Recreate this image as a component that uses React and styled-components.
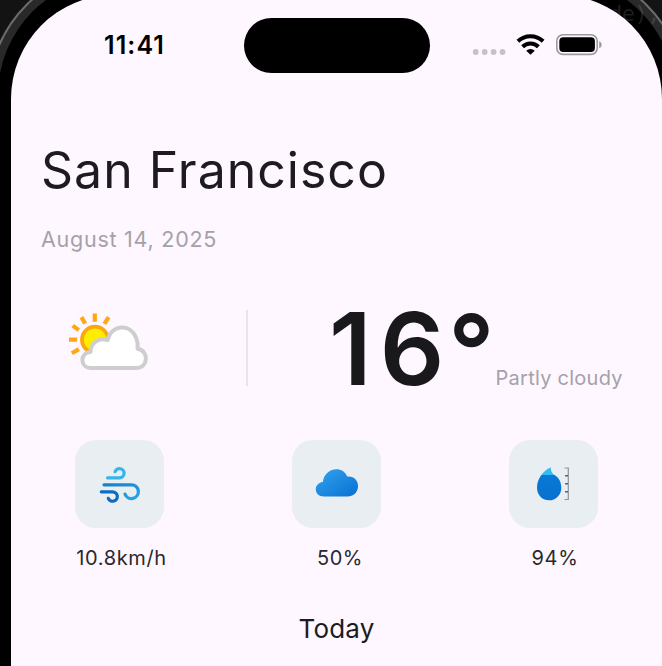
import React from "react";
import styled, { createGlobalStyle } from "styled-components";

const GlobalStyle = createGlobalStyle`
  * { box-sizing: border-box; }
  html, body { margin: 0; padding: 0; overflow: hidden; background: #131313; }
  body { font-family: Inter, "Liberation Sans", sans-serif; color: #1d1b20; }
`;

const Desktop = styled.div`
  position: relative;
  width: 662px;
  height: 666px;
  overflow: hidden;
  background: #131313;
`;

const WindowText = styled.div`
  position: absolute;
  top: 0;
  left: 609px;
  font: 22px/28px "DejaVu Sans Mono", monospace;
  letter-spacing: -0.5px;
  white-space: nowrap;
  color: rgba(255, 255, 255, 0.12);
`;

const Device = styled.div`
  width: 697px;
  height: 900px;
  margin: -33px 0 0 -12px;
  padding: 8px;
  border: 2px solid #6c6c6c;
  border-radius: 128px;
  background: #292929;
`;

const Bezel = styled.div`
  height: 100%;
  padding: 18px 13px;
  border-radius: 118px;
  background: #000;
`;

const Screen = styled.div`
  height: 100%;
  width: 651px;
  padding-top: 5px;
  border-radius: 103px / 104px;
  background: #fef7ff;
`;

const StatusBar = styled.header`
  display: grid;
  grid-template-columns: 232.5px 186px 1fr;
  align-items: center;
  height: 90px;
`;

const Clock = styled.div`
  padding-left: 93px;
  font-size: 25px;
  line-height: 30px;
  font-weight: 600;
  letter-spacing: 1.1px;
  color: #000;
`;

const Island = styled.div`
  height: 55px;
  border-radius: 28px;
  background: #000;
`;

const StatusIcons = styled.div`
  display: flex;
  padding-left: 42.5px;
`;

const Content = styled.main`
  display: flex;
  flex-direction: column;
  padding: 0 30px;
`;

const City = styled.h1`
  margin: 50px 0 0;
  font-size: 50px;
  line-height: 60px;
  font-weight: 400;
  letter-spacing: 1px;
  white-space: nowrap;
`;

const DateLine = styled.p`
  margin: 24px 0 0;
  font-size: 21.5px;
  line-height: 30px;
  letter-spacing: 0.75px;
  color: #a5a1a8;
`;

const Current = styled.section`
  display: grid;
  grid-template-columns: 205px 2px 1fr;
  grid-template-rows: 76px;
  margin-top: 56px;
`;

const ConditionIcon = styled.div`
  padding-left: 25px;
`;

const Divider = styled.div`
  background: #e9e3eb;
`;

const Reading = styled.div`
  display: flex;
  align-items: baseline;
  padding-left: 81px;
  line-height: 76px;
  white-space: nowrap;
`;

const Temperature = styled.span`
  font-size: 101px;
  font-weight: 600;
  color: #19181b;
`;

const Digit = styled.span`
  letter-spacing: ${(p) => p.$tracking}px;
`;

const Degree = styled.span`
  display: inline-block;
  transform: translate(-1px, 2px);
`;

const Condition = styled.span`
  font-size: 20px;
  letter-spacing: 0.25px;
  color: #a5a1a8;
`;

const Metrics = styled.section`
  display: grid;
  grid-template-columns: repeat(3, 217px);
  margin: 54px -30px 0;
`;

const Metric = styled.div`
  display: flex;
  flex-direction: column;
  align-items: center;
`;

const Tile = styled.div`
  display: flex;
  align-items: center;
  justify-content: center;
  width: 89px;
  height: 88px;
  border-radius: 21px;
  background: #e9eef3;
`;

const Value = styled.div`
  margin-top: 15px;
  padding-left: ${(p) => p.$indent}px;
  font-size: 20px;
  line-height: 30px;
  letter-spacing: 0.6px;
  color: #2a282d;
`;

const Today = styled.h2`
  margin: 40px 0 0;
  text-align: center;
  font-size: 26px;
  line-height: 32px;
  font-weight: 400;
  letter-spacing: 0.2px;
`;

const Signals = () => (
  <svg width="130" height="30" viewBox="472 30 130 30">
    <g fill="#c6c1c9">
      <circle cx="475.7" cy="52" r="2.9" />
      <circle cx="484.7" cy="52" r="2.9" />
      <circle cx="493.6" cy="52" r="2.9" />
      <circle cx="502.5" cy="52" r="2.9" />
    </g>
    <g fill="none" stroke="#000" strokeWidth="4">
      <path d="M517.9 41.3a18 18 0 0 1 25.2 0" />
      <path d="M522.6 46.7a11.3 11.3 0 0 1 15.8 0" />
    </g>
    <path d="M526.2 50.7a6.2 6.2 0 0 1 8.6 0l-4.3 4z" fill="#000" />
    <rect x="556.8" y="34.8" width="40.4" height="19.6" rx="6.2" fill="none" stroke="#9d999f" strokeWidth="1.6" />
    <rect x="559.3" y="37.2" width="35.6" height="14.8" rx="4" fill="#000" />
    <path d="M599.2 41.2c3.3 1.2 3.3 5.7 0 7z" fill="#9d999f" />
  </svg>
);

const PartlyCloudy = () => (
  <svg width="84" height="64" viewBox="66 310 84 64">
    <g stroke="#ffa815" strokeWidth="4.2">
      <path d="M94.8 313.5v8.2M81.4 317.1l3.8 6.5M72.7 325.6l6.1 4.5M69 339.6h8.2M71.9 353.3l7-4.2M108.6 317.1l-4.2 6.8" />
    </g>
    <circle cx="95" cy="339.7" r="13" fill="#ffed00" stroke="#ffa60c" strokeWidth="3.8" />
    <path
      d="M91.5 368C79.5 368 79.5 352.6 90.5 352C90.7 342 99.5 337.5 107.5 340.2C111.5 324.5 130 323 136 337.5C138 342 138 345 137.6 348.7C149 350.5 149 368 135.5 368Z"
      fill="#fff"
      stroke="#cfcecf"
      strokeWidth="4"
      strokeLinejoin="round"
    />
  </svg>
);

const Wind = () => (
  <svg width="44" height="40" viewBox="98 464 44 40" fill="none" strokeWidth="3.2" strokeLinecap="round">
    <defs>
      <linearGradient id="breeze" x1="0" y1="0" x2="1" y2="1">
        <stop offset="0" stopColor="#1880ca" />
        <stop offset="1" stopColor="#2aa5e5" />
      </linearGradient>
    </defs>
    <path d="M107.5 477.8h12.1a4.6 4.6 0 1 0-4.5-6.1" stroke="#35b5ea" />
    <path d="M104 484.8h27.5a6.9 6.9 0 1 1-6.5 9.3" stroke="url(#breeze)" />
    <path d="M101.3 491.8h11.3a4.7 4.7 0 1 1-4.3 6.5" stroke="#0d6cc0" />
  </svg>
);

const Cloud = () => (
  <svg width="44" height="30" viewBox="315 468 44 30">
    <defs>
      <linearGradient id="cloudFill" x1="0" y1="0" x2="1" y2="1">
        <stop offset="0" stopColor="#32a4ef" />
        <stop offset="1" stopColor="#0870d2" />
      </linearGradient>
    </defs>
    <path
      d="M324 495.5c-10.5 0-11-13.3-1.2-14.6C325 465.5 343.500 464.5 347.2 475.5c14.4-1.5 14.4 20 .3 20Z"
      fill="url(#cloudFill)"
    />
  </svg>
);

const Humidity = () => (
  <svg width="36" height="36" viewBox="536 466 36 36">
    <defs>
      <linearGradient id="dropFill" x1="0" y1="0" x2="0" y2="1">
        <stop offset="0.22" stopColor="#32bdf0" />
        <stop offset="0.24" stopColor="#0878d6" />
        <stop offset="1" stopColor="#0871cf" />
      </linearGradient>
    </defs>
    <path
      d="M550.8 467.3c-4.5 1.8-13.8 9-13.8 20.4 0 7.7 5.7 12.6 12.2 12.6s12.1-5.4 12.1-12.4c0-7-3.2-10.9-6.5-12.7-3-1.8-4-4.2-4-7.9z"
      fill="url(#dropFill)"
    />
    <path d="M564.5 468h3.8v31.5h-3.8" fill="none" stroke="#929398" strokeWidth="1.2" />
    <path d="M565 475.8h3M565 483.8h3M565 491.7h3" fill="none" stroke="#5f6066" strokeWidth="1.5" />
  </svg>
);

const metrics = [
  { value: "10.8km/h", Icon: Wind, indent: 4 },
  { value: "50%", Icon: Cloud, indent: 7 },
  { value: "94%", Icon: Humidity, indent: 3 },
];

export default function App() {
  return (
    <Desktop>
      <GlobalStyle />
      <Device>
        <Bezel>
          <Screen>
            <StatusBar>
              <Clock>11:41</Clock>
              <Island />
              <StatusIcons>
                <Signals />
              </StatusIcons>
            </StatusBar>
            <Content>
              <City>San Francisco</City>
              <DateLine>August 14, 2025</DateLine>
              <Current>
                <ConditionIcon>
                  <PartlyCloudy />
                </ConditionIcon>
                <Divider />
                <Reading>
                  <Temperature>
                    <Digit $tracking={8}>1</Digit>
                    <Digit $tracking={5}>6</Digit>
                    <Degree>°</Degree>
                  </Temperature>
                  <Condition>Partly cloudy</Condition>
                </Reading>
              </Current>
              <Metrics>
                {metrics.map(({ value, Icon, indent }) => (
                  <Metric key={value}>
                    <Tile>
                      <Icon />
                    </Tile>
                    <Value $indent={indent}>{value}</Value>
                  </Metric>
                ))}
              </Metrics>
              <Today>Today</Today>
            </Content>
          </Screen>
        </Bezel>
      </Device>
      <WindowText>de),</WindowText>
    </Desktop>
  );
}
